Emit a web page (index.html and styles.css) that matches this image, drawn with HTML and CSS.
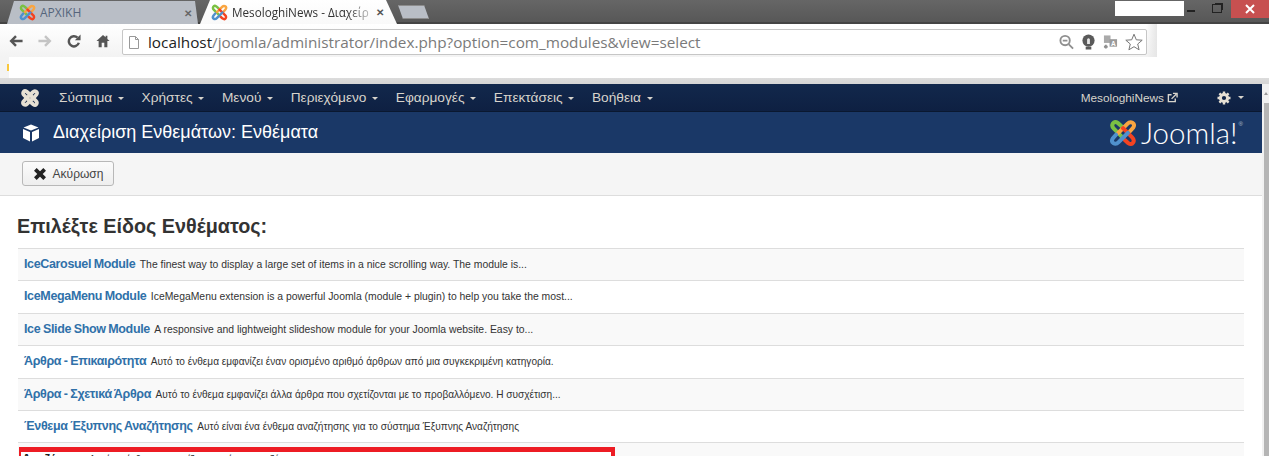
FILE: index.html
```html
<!DOCTYPE html>
<html lang="el">
  <head>
    <meta charset="UTF-8" />
    <title>MesologhiNews - Διαχείριση Ενθεμάτων</title>
    <link rel="stylesheet" href="styles.css">
  </head>
  <body>
    <svg class="sprite" aria-hidden="true">
      <defs>
        <path id="hook" d="M14 8 L10 4.5 Q6.5 2 4.5 5 Q2.5 8 5.5 11 L16 21.5" />
        <symbol id="joomla-color" viewBox="0 0 32 32">
          <use href="#hook" class="hook hook-green" />
          <use href="#hook" class="hook hook-orange" transform="rotate(90 16 16)" />
          <use href="#hook" class="hook hook-red" transform="rotate(180 16 16)" />
          <use href="#hook" class="hook hook-blue" transform="rotate(270 16 16)" />
        </symbol>
        <symbol id="joomla-mono" viewBox="0 0 32 32">
          <use href="#hook" class="hook hook-mono" />
          <use href="#hook" class="hook hook-mono" transform="rotate(90 16 16)" />
          <use href="#hook" class="hook hook-mono" transform="rotate(180 16 16)" />
          <use href="#hook" class="hook hook-mono" transform="rotate(270 16 16)" />
        </symbol>
      </defs>
    </svg>

    <div class="page">
      <!-- browser chrome -->
      <div class="tabstrip">
        <div class="tab tab-idle">
          <svg class="favicon"><use href="#joomla-color" /></svg>
          <span class="tab-title">ΑΡΧΙΚΗ</span>
          <span class="tab-close">✕</span>
        </div>
        <div class="tab tab-active">
          <svg class="favicon"><use href="#joomla-color" /></svg>
          <span class="tab-title">MesologhiNews - Διαχείρ</span>
          <span class="tab-close">✕</span>
        </div>
        <div class="new-tab"></div>
        <div class="window-controls">
          <div class="redacted"></div>
          <div class="win-min"></div>
          <div class="win-restore"></div>
          <div class="win-close">
            <svg width="12" height="12" viewBox="0 0 12 12"><path d="M2 2 L10 10 M10 2 L2 10" class="win-x" /></svg>
          </div>
        </div>
      </div>

      <div class="toolbar">
        <svg class="nav-btn" viewBox="0 0 16 16"><path d="M15.5 8 H3 M8 2.5 L2.5 8 L8 13.5" class="arrow arrow-on" /></svg>
        <svg class="nav-btn" viewBox="0 0 16 16"><path d="M0.5 8 H13 M8 2.5 L13.5 8 L8 13.5" class="arrow arrow-off" /></svg>
        <svg class="nav-btn" viewBox="0 0 16 16"><path d="M13.5 10 A5.8 5.8 0 1 1 12 4.2" class="arrow arrow-on" /><path d="M9 7 H15.5 V0.5 Z" class="solid" /></svg>
        <svg class="nav-btn" viewBox="0 0 16 16"><path d="M8 1 L0.5 8 H3 V15 H6.5 V10 H9.5 V15 H13 V8 H15.5 L13 5.6 V2 H11 V3.8 Z" class="solid" /></svg>
        <div class="omnibox">
          <svg class="page-icon" viewBox="0 0 10 13"><path d="M0.5 0.5 H6.5 L9.5 3.5 V12.5 H0.5 Z M6.5 0.5 V3.5 H9.5" class="page-line" /></svg>
          <span class="url"><span class="url-host">localhost</span>/joomla/administrator/index.php?option=com_modules&amp;view=select</span>
          <div class="omni-icons">
            <svg class="omni-icon" viewBox="0 0 16 16"><circle cx="6.5" cy="6.5" r="5" class="lens" /><path d="M4 6.5 H9 M10.5 10.5 L15 15" class="lens" /></svg>
            <svg class="omni-icon" viewBox="0 0 16 16"><circle cx="8" cy="6.5" r="6.5" class="bulb" /><path d="M6.5 10 V5 Q8 3 9.5 5 V10 Z" class="bulb-glow" /><rect x="5" y="13" width="6" height="3" class="bulb" /></svg>
            <svg class="omni-icon" viewBox="0 0 16 16"><rect x="1" y="1" width="7" height="8" class="trans-back" /><rect x="7" y="5" width="8" height="8" class="trans-front" /><text x="11" y="12" class="trans-letter">A</text><path d="M1 13 H5 M3 11 V15" class="lens" /></svg>
            <svg class="omni-star" viewBox="0 0 18 18"><path d="M9 1.2 L11.3 6.8 L17.2 7.2 L12.7 11 L14.1 16.8 L9 13.7 L3.9 16.8 L5.3 11 L0.8 7.2 L6.7 6.8 Z" class="star" /></svg>
          </div>
        </div>
      </div>

      <div class="bookmarks"><span class="bookmark-dot"></span></div>
      <div class="chrome-edge"></div>

      <!-- page in the browser -->
      <div class="viewport">
        <div class="app">
          <nav class="navbar">
            <svg class="nav-logo"><use href="#joomla-mono" /></svg>
            <ul class="menu">
              <li class="menu-item">Σύστημα <span class="caret"></span></li>
              <li class="menu-item">Χρήστες <span class="caret"></span></li>
              <li class="menu-item">Μενού <span class="caret"></span></li>
              <li class="menu-item">Περιεχόμενο <span class="caret"></span></li>
              <li class="menu-item">Εφαρμογές <span class="caret"></span></li>
              <li class="menu-item">Επεκτάσεις <span class="caret"></span></li>
              <li class="menu-item">Βοήθεια <span class="caret"></span></li>
            </ul>
            <div class="nav-right">
              <span class="site-link">MesologhiNews
                <svg class="ext-icon" viewBox="0 0 12 12"><path d="M9 7 V10.5 H1.5 V3 H5" class="ext-line" /><path d="M5 7.5 L10 2.5 M6.5 1.5 H11 V6" class="ext-line" /></svg>
              </span>
              <span class="gear">
                <svg class="gear-icon" viewBox="0 0 14 14"><circle cx="7" cy="7" r="3.6" class="gear-ring" /><path d="M7 0.5 V13.5 M0.5 7 H13.5 M2.4 2.4 L11.6 11.6 M11.6 2.4 L2.4 11.6" class="gear-teeth" /></svg>
                <span class="caret"></span>
              </span>
            </div>
          </nav>

          <header class="page-title">
            <svg class="cube" viewBox="0 0 18 18"><path d="M9 0.5 L16.5 3.5 L9 6.5 L1.5 3.5 Z M1 5 L8 8 V17.5 L1 14 Z M17 5 L10 8 V17.5 L17 14 Z" class="cube-face" /></svg>
            <h1 class="page-heading">Διαχείριση Ενθεμάτων: Ενθέματα</h1>
            <div class="brand">
              <svg class="brand-mark"><use href="#joomla-color" /></svg>
              <span class="brand-word">Joomla!</span>
              <span class="brand-reg">®</span>
            </div>
          </header>

          <div class="subhead">
            <button class="btn-cancel">
              <svg class="btn-x" viewBox="0 0 12 12"><path d="M2 2 L10 10 M10 2 L2 10" /></svg>
              Ακύρωση
            </button>
          </div>

          <main class="content">
            <h2 class="select-title">Επιλέξτε Είδος Ενθέματος:</h2>
            <ul class="module-list">
              <li class="module-row"><a class="module-name">IceCarosuel Module</a> <small class="module-desc">The finest way to display a large set of items in a nice scrolling way. The module is...</small></li>
              <li class="module-row"><a class="module-name">IceMegaMenu Module</a> <small class="module-desc">IceMegaMenu extension is a powerful Joomla (module + plugin) to help you take the most...</small></li>
              <li class="module-row"><a class="module-name">Ice Slide Show Module</a> <small class="module-desc">A responsive and lightweight slideshow module for your Joomla website. Easy to...</small></li>
              <li class="module-row"><a class="module-name">Άρθρα - Επικαιρότητα</a> <small class="module-desc module-desc-el">Αυτό το ένθεμα εμφανίζει έναν ορισμένο αριθμό άρθρων από μια συγκεκριμένη κατηγορία.</small></li>
              <li class="module-row"><a class="module-name">Άρθρα - Σχετικά Άρθρα</a> <small class="module-desc module-desc-el">Αυτό το ένθεμα εμφανίζει άλλα άρθρα που σχετίζονται με το προβαλλόμενο. Η συσχέτιση...</small></li>
              <li class="module-row"><a class="module-name">Ένθεμα Έξυπνης Αναζήτησης</a> <small class="module-desc module-desc-el">Αυτό είναι ένα ένθεμα αναζήτησης για το σύστημα Έξυπνης Αναζήτησης</small></li>
              <li class="module-row module-marked">
                <div class="red-box"><a class="module-name module-name-dark">Αναζήτηση</a> <small class="module-desc module-desc-el">Αυτό το ένθεμα εμφανίζει μια φόρμα αναζήτησης.</small></div>
              </li>
            </ul>
          </main>
        </div>
        <div class="scrollbar">
          <span class="scroll-up"></span>
          <span class="scroll-thumb"></span>
        </div>
      </div>
    </div>
  </body>
</html>
```

FILE: styles.css
```css
* {
  margin: 0;
  padding: 0;
  box-sizing: border-box;
}

html,
body {
  height: 456px;
  overflow: hidden;
  background: #fff;
}

body {
  font-family: "Liberation Sans", Arial, sans-serif;
  color: #333;
}

.sprite {
  position: absolute;
  width: 0;
  height: 0;
}

.page {
  width: 1269px;
}

/* joomla mark */
.hook {
  fill: none;
  stroke-width: 4.6;
  stroke-linecap: round;
}
.hook-green { stroke: #7ac143; }
.hook-orange { stroke: #f9a541; }
.hook-red { stroke: #f44321; }
.hook-blue { stroke: #5091cd; }
.hook-mono { stroke: #e6e0d4; stroke-width: 6.5; }

/* tabs */
.tabstrip {
  height: 24px;
  display: flex;
  align-items: flex-end;
  background: linear-gradient(#666, #565656);
  box-shadow: inset 0 -2px 0 #444;
}

.tab {
  height: 23px;
  display: flex;
  align-items: center;
  font-family: "Open Sans", sans-serif;
  font-size: 12px;
}

.tab-idle {
  width: 191px;
  margin-left: 7px;
  padding: 0 2px 0 12px;
  background: #b9bec6;
  clip-path: polygon(0 100%, 7px 0, 188px 0, 100% 100%);
  color: #55657c;
}

.tab-active {
  width: 197px;
  margin-left: 2px;
  padding: 0 9px 0 11px;
  background: linear-gradient(#fff, #f9f9f9);
  clip-path: polygon(0 100%, 10px 0, 186px 0, 100% 100%);
  color: #333;
  height: 24px;
}

.favicon {
  width: 17px;
  height: 17px;
  flex: none;
}

.tab-title {
  flex: 1;
  margin-left: 4px;
  white-space: nowrap;
  overflow: hidden;
}

.tab-active .tab-title {
  font-size: 11.7px;
  -webkit-mask-image: linear-gradient(90deg, #000 82%, #0004);
  mask-image: linear-gradient(90deg, #000 82%, #0004);
}

.tab-close {
  width: 12px;
  margin-left: 5px;
  font-size: 10px;
  font-weight: 700;
  color: #666;
}

.tab-active .tab-close {
  color: #555;
}

.new-tab {
  width: 31px;
  height: 14px;
  margin: 0 0 5px 1px;
  background: #b9bec6;
  border: 1px solid #8c8c8c;
  clip-path: polygon(0 0, 26px 0, 100% 100%, 5px 100%);
}

.window-controls {
  margin-left: auto;
  height: 100%;
  display: flex;
  align-items: flex-start;
}

.redacted {
  width: 69px;
  height: 15px;
  margin-top: 1px;
  background: #fff;
}

.win-min {
  width: 8px;
  height: 2px;
  margin: 10px 0 0 3px;
  background: #222;
}

.win-restore {
  width: 10px;
  height: 9px;
  margin: 4px 0 0 17px;
  border: 1px solid #222;
  box-shadow: 2px -2px 0 -1px #222;
}

.win-close {
  width: 38px;
  height: 18px;
  margin-left: 9px;
  background: #c75050;
  display: flex;
  align-items: center;
  justify-content: center;
}

.win-x {
  fill: none;
  stroke: #fff;
  stroke-width: 2;
}

/* toolbar */
.toolbar {
  width: 1157px;
  height: 33px;
  padding: 5px 10px 2px 9px;
  display: flex;
  align-items: flex-start;
  gap: 15px;
  background: linear-gradient(90deg, transparent 1146px, #e6e6e6), linear-gradient(#fff, #f3f3f3);
}

.nav-btn {
  width: 14px;
  height: 14px;
  margin-top: 5px;
  flex: none;
}

.arrow {
  fill: none;
  stroke-width: 2.8;
}
.arrow-on { stroke: #555; }
.arrow-off { stroke: #c4c4c4; }
.solid { fill: #555; }

.omnibox {
  flex: none;
  width: 1025px;
  height: 26px;
  margin-left: -3px;
  padding: 0 3px 0 6px;
  display: flex;
  align-items: center;
  background: #fff;
  border: 1px solid #c6c6c6;
  border-radius: 2px;
}

.page-icon {
  width: 10px;
  height: 13px;
  flex: none;
}

.page-line {
  fill: #fff;
  stroke: #999;
}

.url {
  margin-left: 9px;
  font-family: "Open Sans", sans-serif;
  font-size: 15.3px;
  color: #7a7a7a;
  white-space: nowrap;
}

.url-host {
  color: #222;
}

.omni-icons {
  margin-left: auto;
  display: flex;
  align-items: center;
  gap: 7px;
}

.omni-icon {
  width: 15px;
  height: 16px;
}

.omni-star {
  width: 18px;
  height: 18px;
}

.lens {
  fill: none;
  stroke: #8f8f8f;
  stroke-width: 2;
}

.bulb { fill: #5a5a5a; }
.bulb-glow { fill: #e8e8e8; }
.trans-back { fill: #aaa; }
.trans-front { fill: #9a9a9a; }

.trans-letter {
  font-size: 7px;
  font-weight: 700;
  text-anchor: middle;
  fill: #fff;
}

.star {
  fill: #fff;
  stroke: #777;
}

.bookmarks {
  height: 21px;
  padding-left: 7px;
  display: flex;
  align-items: center;
  background: linear-gradient(90deg, #f3f3f3 9px, #fff 9px);
}

.bookmark-dot {
  width: 2px;
  height: 7px;
  background: #f9c83c;
}

.chrome-edge {
  height: 6px;
  background: linear-gradient(#dcdcdc, #d4d4d4);
}

/* admin page */
.viewport {
  display: flex;
  height: 372px;
  overflow: hidden;
}

.app {
  width: 1262px;
  flex: none;
}

.navbar {
  height: 28px;
  padding-left: 21px;
  display: flex;
  align-items: center;
  background: linear-gradient(#12284c, #0e2042);
  border-bottom: 1px solid #0a1830;
  color: #d8d4cc;
  font-size: 13.7px;
}

.nav-logo {
  width: 18px;
  height: 18px;
  flex: none;
}

.menu {
  display: flex;
  list-style: none;
  margin-left: 20px;
  gap: 17.5px;
}

.menu-item {
  white-space: nowrap;
}

.caret {
  display: inline-block;
  width: 0;
  height: 0;
  margin-left: 2px;
  vertical-align: middle;
  border-top: 3px solid currentColor;
  border-left: 3px solid transparent;
  border-right: 3px solid transparent;
}

.nav-right {
  margin-left: auto;
  padding-right: 18px;
  display: flex;
  align-items: center;
}

.site-link {
  display: flex;
  align-items: center;
  gap: 3px;
  font-size: 11.8px;
}

.ext-icon {
  width: 11px;
  height: 11px;
}

.ext-line {
  fill: none;
  stroke: currentColor;
  stroke-width: 1.5;
}

.gear {
  margin-left: 39px;
  display: flex;
  align-items: center;
  gap: 7px;
}

.gear .caret {
  margin-left: 0;
}

.gear-icon {
  width: 14px;
  height: 14px;
}

.gear-ring {
  fill: none;
  stroke: #e6e0d4;
  stroke-width: 3;
}

.gear-teeth {
  fill: none;
  stroke: #e6e0d4;
  stroke-width: 2.4;
  stroke-dasharray: 2.6 7.8;
}

.page-title {
  height: 41px;
  padding: 0 19px 0 22px;
  display: flex;
  align-items: center;
  background: #1a3867;
  color: #fff;
}

.cube {
  width: 18px;
  height: 18px;
  flex: none;
}

.cube-face { fill: #fff; }

.page-heading {
  margin-left: 13px;
  font-size: 18px;
  font-weight: 400;
}

.brand {
  margin-left: auto;
  display: flex;
  align-items: center;
  gap: 4px;
}

.brand-mark {
  width: 28px;
  height: 28px;
}

.brand-word {
  font-family: Lato, sans-serif;
  font-weight: 300;
  font-size: 29.5px;
  line-height: 30px;
}

.brand-reg {
  align-self: flex-start;
  margin: 3px 0 0 -3px;
  font-size: 6px;
  color: #b8c2d2;
}

.subhead {
  height: 43px;
  padding: 8px 22px 0;
  background: #f5f5f5;
  border-bottom: 1px solid #ddd;
}

.btn-cancel {
  width: 92px;
  height: 25px;
  display: flex;
  align-items: center;
  justify-content: center;
  gap: 6px;
  font-family: inherit;
  font-size: 12px;
  color: #444;
  background: linear-gradient(#fbfbfb, #eee);
  border: 1px solid #b8b8b8;
  border-radius: 3px;
}

.btn-x {
  width: 14px;
  height: 14px;
  fill: none;
  stroke: #222;
  stroke-width: 3.2;
}

.content {
  padding: 0 18px;
}

.select-title {
  height: 52px;
  padding-top: 18px;
  margin-left: -1px;
  font-size: 19.8px;
  line-height: 24px;
  color: #333;
}

.module-list {
  list-style: none;
  border-bottom: 1px solid #ddd;
}

.module-row {
  height: 32.4px;
  padding: 0 6px;
  display: block;
  line-height: 27px;
  border-top: 1px solid #ddd;
  white-space: nowrap;
}

.module-row:nth-child(odd) {
  background: #f9f9f9;
}

.module-name {
  font-size: 12.5px;
  font-weight: 700;
  letter-spacing: -0.35px;
  word-spacing: -0.5px;
  color: #3071a9;
}

.module-desc {
  font-size: 10.4px;
  color: #333;
}

.module-desc-el {
  font-size: 10.1px;
}

.module-marked {
  position: relative;
}

/* red mark drawn over the row */
.red-box {
  position: absolute;
  top: 4px;
  left: 1px;
  width: 596px;
  height: 60px;
  padding-left: 1px;
  line-height: 12px;
  background: #fff;
  border: solid #ed1c24;
  border-width: 5px 4px 4px 2px;
}

.module-name-dark {
  color: #222;
}

.scrollbar {
  width: 7px;
  flex: none;
  position: relative;
  background: #f1f1f1;
}

.scroll-up {
  position: absolute;
  top: 8px;
  left: 2px;
  border-bottom: 3px solid #999;
  border-left: 2px solid transparent;
  border-right: 2px solid transparent;
}

.scroll-thumb {
  display: block;
  margin: 19px 0 0 2px;
  height: 400px;
  background: #b5b5b5;
}
```
